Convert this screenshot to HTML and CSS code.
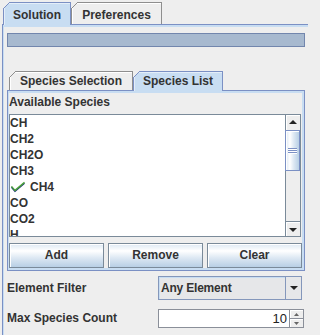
FILE: index.html
```html
<!DOCTYPE html>
<html>
<head>
<meta charset="utf-8">
<link rel="stylesheet" href="styles.css">
</head>
<body>
<div class="tabbar outer-tabs">
  <div class="tab tab-solution selected">Solution</div>
  <div class="tab tab-prefs">Preferences</div>
</div>
<div class="outer-panel">
  <div class="progress"></div>
  <div class="inner">
    <div class="tabbar inner-tabs">
      <div class="tab tab-sel">Species Selection</div>
      <div class="tab tab-list selected">Species List</div>
    </div>
    <div class="inner-panel">
      <div class="caption">Available Species</div>
      <div class="list">
        <div class="items">
          <div class="row">CH</div>
          <div class="row">CH2</div>
          <div class="row">CH2O</div>
          <div class="row">CH3</div>
          <div class="row checked">
            <svg class="check" width="16" height="16" viewBox="0 0 16 16"><polyline points="1.5,8.3 5,12.3 14.5,4.3" fill="none" stroke="#1c2a78" stroke-width="1.4"/><polyline points="1.5,7.4 5,11.4 14.5,3.4" fill="none" stroke="#4aa23a" stroke-width="1.4"/></svg>
            <span class="row-text">CH4</span>
          </div>
          <div class="row">CO</div>
          <div class="row">CO2</div>
          <div class="row">H</div>
        </div>
        <div class="scrollbar">
          <div class="sb-btn sb-up"><svg width="8" height="4" viewBox="0 0 8 4"><polygon points="0,4 8,4 4,0" fill="#222"/></svg></div>
          <div class="sb-thumb"><div class="grip"></div></div>
          <div class="sb-track"></div>
          <div class="sb-btn sb-down"><svg width="8" height="4" viewBox="0 0 8 4"><polygon points="0,0 8,0 4,4" fill="#222"/></svg></div>
        </div>
      </div>
      <div class="buttons">
        <div class="btn">Add</div>
        <div class="btn">Remove</div>
        <div class="btn">Clear</div>
      </div>
    </div>
  </div>
  <div class="form">
    <div class="label">Element Filter</div>
    <div class="combo">
      <div class="combo-text">Any Element</div>
      <div class="combo-arrow"><svg width="8" height="4" viewBox="0 0 8 4"><polygon points="0,0 8,0 4,4" fill="#222"/></svg></div>
    </div>
    <div class="label">Max Species Count</div>
    <div class="spinner">
      <div class="spin-field">10</div>
      <div class="spin-btns">
        <div class="spin-btn"><svg width="5" height="3" viewBox="0 0 5 3"><polygon points="0,3 5,3 2.5,0" fill="#666"/></svg></div>
        <div class="spin-btn"><svg width="5" height="3" viewBox="0 0 5 3"><polygon points="0,0 5,0 2.5,3" fill="#666"/></svg></div>
      </div>
    </div>
  </div>
</div>
</body>
</html>
```
FILE: styles.css
```css
* { box-sizing: border-box; }
html, body { margin: 0; padding: 0; }
body {
  width: 308px;
  height: 335px;
  overflow: hidden;
  background: #eeeeee;
  font: bold 12px "Liberation Sans", Arial, sans-serif;
  color: #333333;
}

/* tabs */
.tabbar { display: flex; align-items: flex-end; }
.outer-tabs { height: 24px; padding-left: 3px; }
.inner-tabs { height: 19px; padding-left: 2px; }

.tab {
  position: relative;
  text-align: center;
  line-height: 16px;
  border: 1px solid #8e8e8e;
  border-bottom: none;
  background: #eeeeee;
  box-shadow: inset 1px 1px 0 #ffffff;
}
.tab::before {
  content: "";
  position: absolute;
  left: -1px;
  top: -1px;
  width: 7px;
  height: 7px;
  background: linear-gradient(to bottom right, #eeeeee 0, #eeeeee calc(50% - 0.7px), #8e8e8e calc(50% - 0.7px), #8e8e8e calc(50% + 0.7px), transparent calc(50% + 0.7px));
}
.tab.selected {
  background: #c8ddf2;
  border-color: #7b90c4;
  box-shadow: inset 1px 1px 0 #e4eef9;
  margin-bottom: -1px;
  z-index: 1;
}
.tab.selected::before {
  background: linear-gradient(to bottom right, #eeeeee 0, #eeeeee calc(50% - 0.7px), #7b90c4 calc(50% - 0.7px), #7b90c4 calc(50% + 0.7px), transparent calc(50% + 0.7px));
}
.outer-tabs .tab { height: 22px; padding-top: 4px; }
.outer-tabs .tab.selected { height: 23px; }
.tab-solution { width: 68px; }
.tab-prefs { width: 91px; }

.inner-tabs .tab { height: 19px; padding-top: 1px; }
.inner-tabs .tab.selected { height: 20px; }
.tab-sel { width: 124px; }
.tab-list { width: 90px; }

/* outer panel */
.outer-panel {
  position: relative;
  margin-left: 2px;
  width: 330px;
  height: 320px;
  border-top: 1px solid #7b90c4;
  border-left: 1px solid #7b90c4;
  box-shadow: inset 0 2px 0 #c8ddf2, inset 1px 0 0 #c8ddf2;
  padding-top: 8px;
}

.progress {
  margin-left: 4px;
  width: 298px;
  height: 14px;
  border: 1px solid #7286ad;
  background: #a7b9cf;
}

.inner { margin: 24px 0 0 4px; }

.inner-panel {
  width: 298px;
  height: 181px;
  border: 1px solid #7b90c4;
  box-shadow: inset 0 2px 0 #c8ddf2, inset 1px 0 0 #c8ddf2, inset -2px 0 0 #c8ddf2, inset 0 -2px 0 #c8ddf2;
  padding: 4px 0 0 1px;
}

.caption { height: 15px; line-height: 15px; }

.list {
  margin-top: 4px;
  width: 292px;
  height: 123px;
  border: 1px solid #7a8a99;
  background: #ffffff;
  display: flex;
}
.items { flex: 1; overflow: hidden; }
.row { height: 16px; line-height: 16px; white-space: nowrap; }
.row.checked { display: flex; align-items: center; }
.check { display: block; }
.row-text { margin-left: 4px; }

.scrollbar {
  width: 15px;
  display: flex;
  flex-direction: column;
  border-left: 1px solid #7a8a99;
  background: #eeeeee;
}
.sb-btn {
  height: 15px;
  display: flex;
  align-items: center;
  justify-content: center;
  background: #eeeeee;
  box-shadow: inset 1px 1px 0 #ffffff;
}
.sb-down { border-top: 1px solid #7a8a99; padding-top: 1px; }
.sb-up { padding-bottom: 1px; }
.sb-thumb {
  height: 41px;
  border: 1px solid #7b90c4;
  margin-left: -1px;
  background: linear-gradient(to right, #dde8f3 0%, #ffffff 30%, #dde8f3 60%, #b8cfe5 100%);
  box-shadow: inset 1px 1px 0 #ffffff;
  display: flex;
  justify-content: center;
  padding-top: 17px;
}
.grip {
  width: 9px;
  height: 6px;
  background: repeating-linear-gradient(to bottom, #7b90c4 0, #7b90c4 1px, #ffffff 1px, #ffffff 2px);
}
.sb-track { flex: 1; }

.buttons { margin-top: 6px; display: flex; gap: 4px; }
.btn {
  width: 95px;
  height: 25px;
  line-height: 23px;
  text-align: center;
  border: 1px solid #7a8a99;
  background: linear-gradient(to bottom, #dde8f3 0%, #ffffff 30%, #dde8f3 60%, #b8cfe5 100%);
  box-shadow: inset 1px 1px 0 #ffffff;
}

/* form */
.form {
  margin: 5px 0 0 4px;
  display: grid;
  grid-template-columns: 151px auto;
  row-gap: 9px;
  justify-items: start;
}
.label { align-self: center; line-height: 15px; }
.combo {
  width: 144px;
  height: 24px;
  display: flex;
  border: 1px solid #8497bb;
  background: #e6e7e9;
  box-shadow: inset 1px 1px 0 #c8ddf2;
}
.combo-text { flex: 1; line-height: 22px; padding-left: 2px; letter-spacing: -0.2px; }
.combo-arrow {
  width: 16px;
  border-left: 1px solid #8497bb;
  display: flex;
  align-items: center;
  justify-content: center;
  background: #e6e7e9;
}

.spinner {
  width: 146px;
  height: 19px;
  display: flex;
}
.spin-field {
  flex: 1;
  border: 1px solid #8a8f99;
  border-right: none;
  background: #ffffff;
  font: normal 13px "Liberation Sans", Arial, sans-serif;
  line-height: 17px;
  text-align: right;
  padding-right: 2px;
  color: #222;
}
.spin-btns {
  width: 15px;
  display: flex;
  flex-direction: column;
  border: 1px solid #8a8f99;
}
.spin-btn {
  flex: 1;
  display: flex;
  align-items: center;
  justify-content: center;
  background: #eeeeee;
  box-shadow: inset 1px 1px 0 #ffffff;
}
.spin-btn + .spin-btn { border-top: 1px solid #8a8f99; }
```
